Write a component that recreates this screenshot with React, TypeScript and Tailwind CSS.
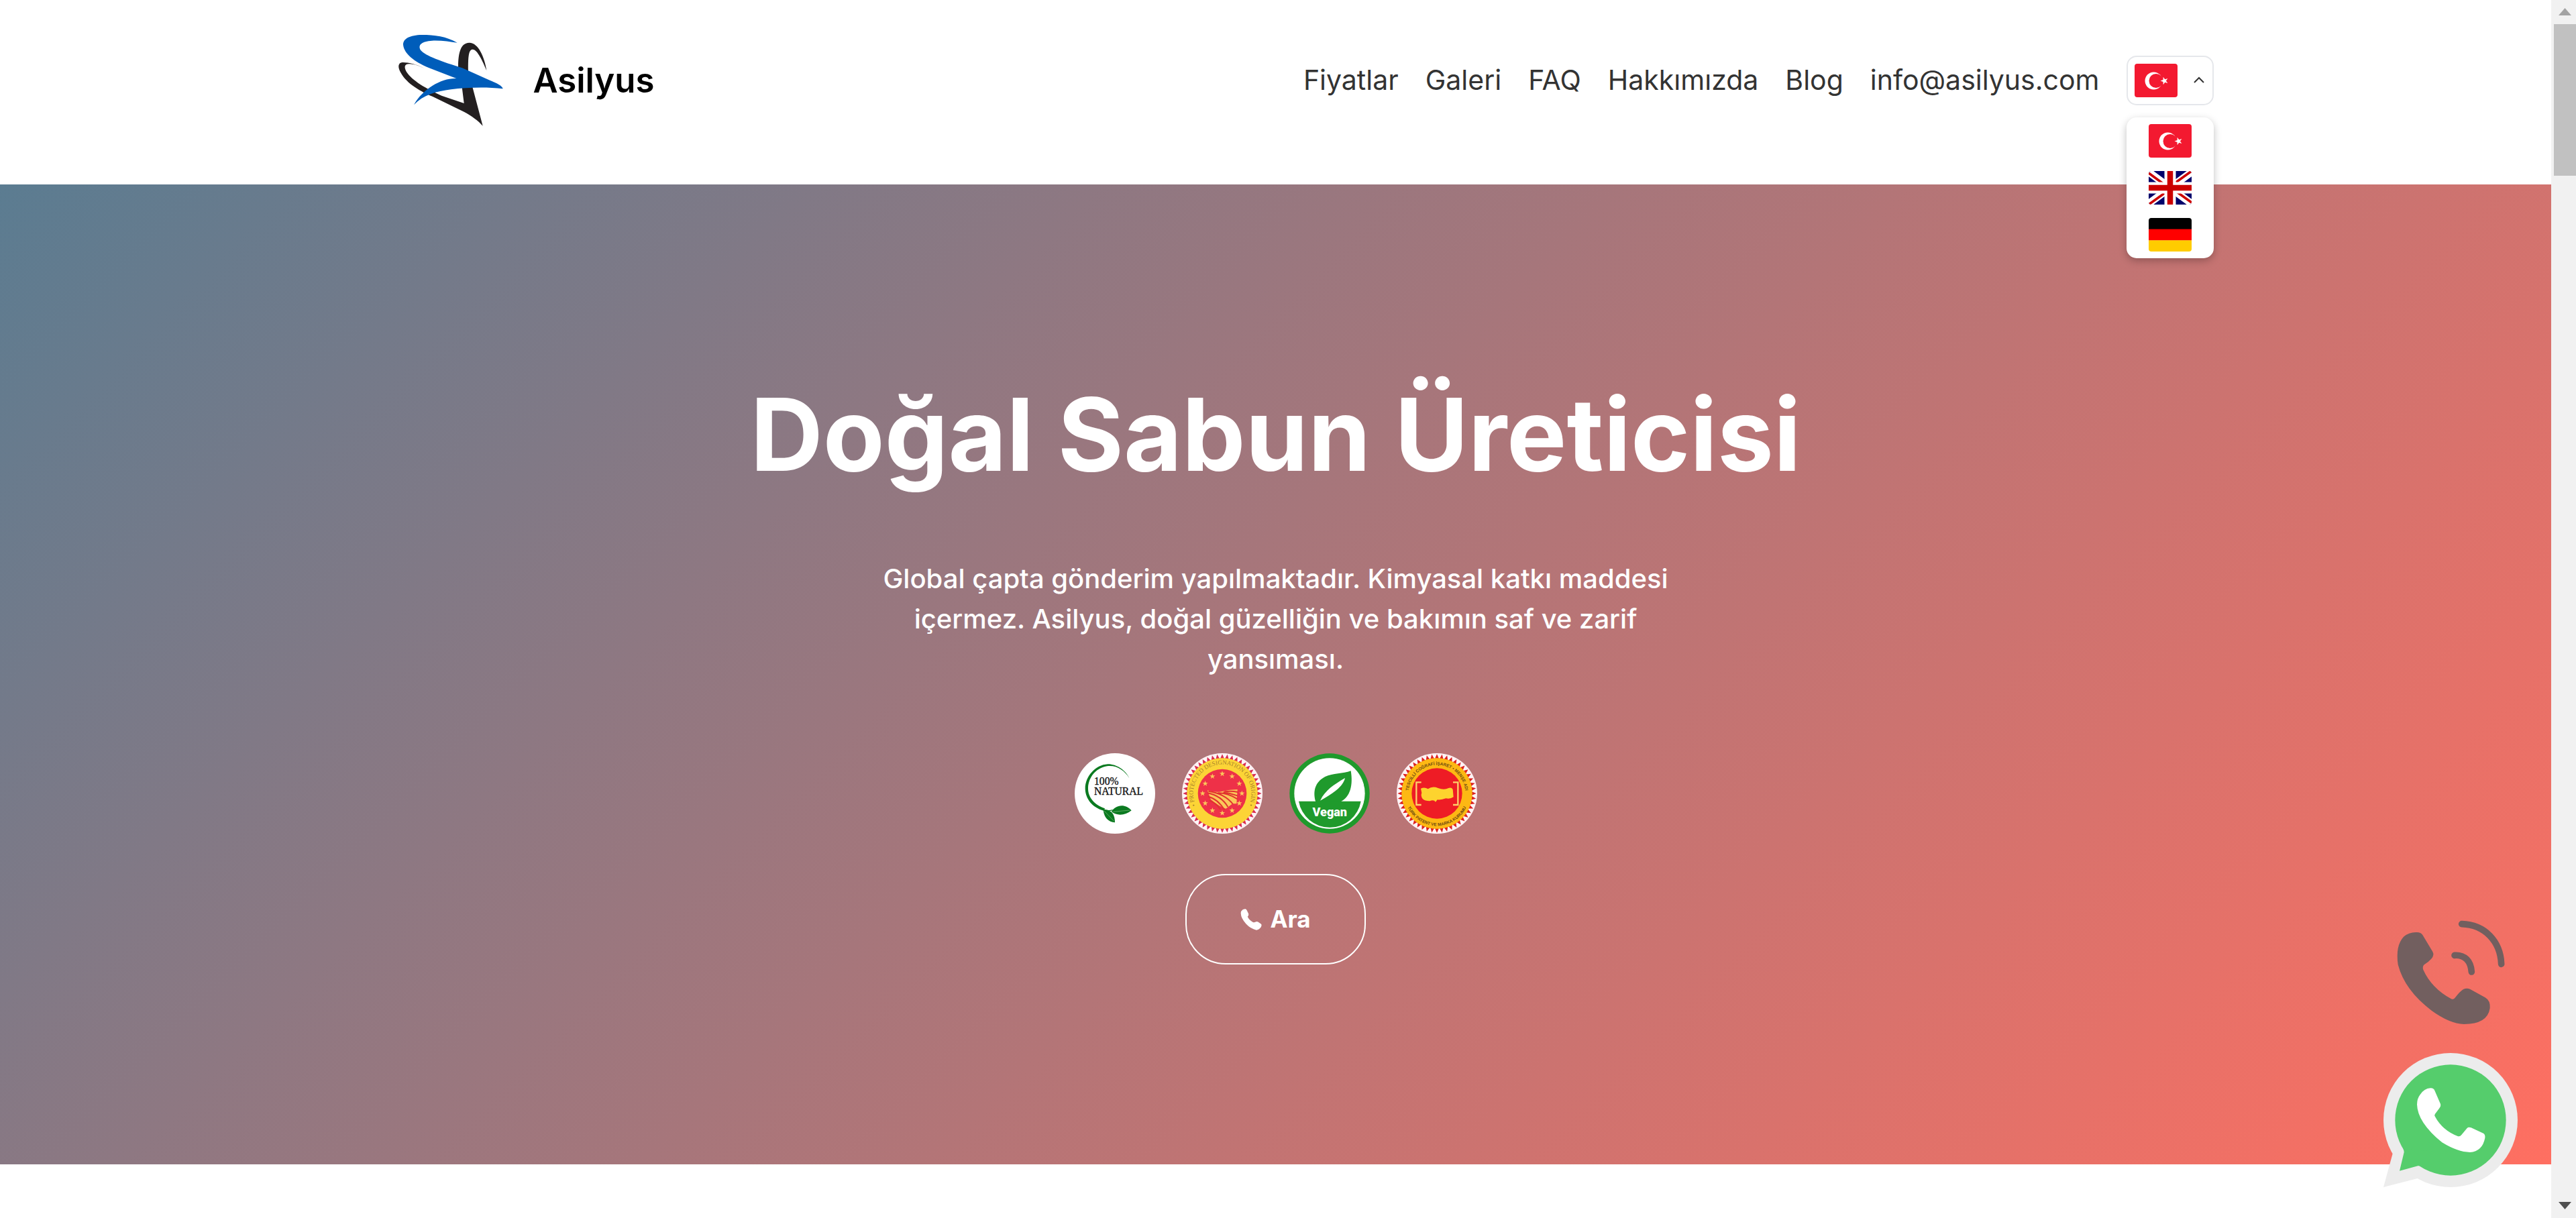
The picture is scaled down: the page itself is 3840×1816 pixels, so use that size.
import { useState } from "react"

type FlagCode = "tr" | "en" | "de"

const navLinks = [
  { label: "Fiyatlar", href: "#fiyatlar" },
  { label: "Galeri", href: "#galeri" },
  { label: "FAQ", href: "#faq" },
  { label: "Hakkımızda", href: "#hakkimizda" },
  { label: "Blog", href: "#blog" },
  { label: "info@asilyus.com", href: "mailto:info@asilyus.com" },
]

const languages: { code: FlagCode; label: string }[] = [
  { code: "tr", label: "Türkçe" },
  { code: "en", label: "English" },
  { code: "de", label: "Deutsch" },
]

function starPoints(cx: number, cy: number, r: number, turn = -90) {
  return Array.from({ length: 10 }, (_, i) => {
    const a = ((turn + i * 36) * Math.PI) / 180
    const d = i % 2 === 0 ? r : r * 0.4
    return `${(cx + d * Math.cos(a)).toFixed(2)},${(cy + d * Math.sin(a)).toFixed(2)}`
  }).join(" ")
}

function Flag({ code }: { code: FlagCode }) {
  return (
    <svg viewBox="0 0 64 50" className="w-16 h-[50px] rounded-sm" aria-hidden="true">
      {code === "tr" && (
        <>
          <rect width="64" height="50" fill="#f31930" />
          <circle cx="28.500" cy="25.500" r="13" fill="#fff" />
          <circle cx="32" cy="25.500" r="10.500" fill="#f31930" />
          <polygon points={starPoints(44.5, 25.5, 6, 180)} fill="#fff" />
        </>
      )}
      {code === "en" && (
        <>
          <rect width="64" height="50" fill="#00006b" />
          <path d="M-2 0L66 50M66 0L-2 50" stroke="#fff" strokeWidth="11" />
          <path d="M0 3L32 26.500M64 0L32 23M64 47L32 24M0 50L32 27" stroke="#c00" strokeWidth="3.500" />
          <path d="M32 0V50M0 25H64" stroke="#fff" strokeWidth="17" />
          <path d="M32 0V50M0 25H64" stroke="#c00" strokeWidth="8.500" />
        </>
      )}
      {code === "de" && (
        <>
          <rect width="64" height="17" fill="#000" />
          <rect y="16.600" width="64" height="17" fill="#f00" />
          <rect y="33.300" width="64" height="17" fill="#fc0" />
        </>
      )}
    </svg>
  )
}

function Logo() {
  return (
    <svg viewBox="-165 0 873 600" className="w-[291px] h-[200px]" aria-hidden="true">
      <path
        d="M222 247C185 226 145 218 122 219C104 221 102 238 111 257C135 307 190 343 258 372L398 440C432 458 462 480 482 503L434 322L388 322L398 402L298 368C230 338 165 300 141 262C128 238 133 226 153 226C177 226 202 237 222 247Z"
        fill="#231f20"
      />
      <path
        d="M372 240C372 190 378 131 422 131C462 131 490 195 499 255C482 215 458 161 437 161C419 161 416 190 417 260L417 300L372 290Z"
        fill="#231f20"
      />
      <path
        d="M368 131C320 103 265 96 210 96C155 97 126 113 126 140C130 180 175 215 240 243L364 291C300 288 215 335 174 409C215 365 275 348 340 340C410 332 490 328 572 337C570 325 545 312 510 298L390 244C300 215 225 190 204 164C190 140 210 125 255 122C295 120 335 127 368 131Z"
        fill="#005dba"
      />
    </svg>
  )
}

function NaturalBadge() {
  return (
    <svg viewBox="0 0 360 360" className="size-[120px]" role="img" aria-label="100% Natural">
      <circle cx="180" cy="180" r="180" fill="#fff" />
      <path
        d="M244 111C228 75 185 48 148 49C92 52 47 105 47 158C48 205 80 243 130 257L135 247C88 230 59 198 60 155C62 104 100 62 150 57C190 54 224 78 244 111Z"
        fill="#0b7a20"
      />
      <path d="M128 254C165 250 180 275 180 310C150 306 132 290 128 254Z" fill="#0b7a20" />
      <path d="M165 262C180 232 225 222 254 256C228 278 190 282 165 262Z" fill="#0b7a20" />
      <path d="M120 248Q145 262 170 254" stroke="#0b7a20" strokeWidth="4" fill="none" />
      <path d="M132 258L176 304M172 262L246 255" stroke="#7fbf7f" strokeWidth="2" />
      <g fill="#111" stroke="#111" strokeWidth="1" fontFamily="'Liberation Serif', serif">
        <text x="87" y="141" fontSize="47">100%</text>
        <text x="87" y="187" fontSize="47">NATURAL</text>
      </g>
    </svg>
  )
}

function SealTeeth({ color }: { color: string }) {
  return (
    <>
      <circle cx="180" cy="180" r="180" fill="#fdf3f5" />
      {Array.from({ length: 48 }, (_, i) => (
        <polygon
          key={i}
          points="180,4 189,25 171,25"
          fill={color}
          transform={`rotate(${i * 7.5} 180 180)`}
        />
      ))}
    </>
  )
}

function OriginBadge() {
  return (
    <svg viewBox="0 0 360 360" className="size-[120px]" role="img" aria-label="Protected designation of origin">
      <SealTeeth color="#d92b50" />
      <circle cx="180" cy="180" r="158" fill="#fcd436" />
      <circle cx="180" cy="180" r="109" fill="#ee3148" />
      {Array.from({ length: 12 }, (_, i) => {
        const a = (i * Math.PI) / 6
        return (
          <polygon
            key={i}
            points={starPoints(180 + 88 * Math.cos(a), 180 + 88 * Math.sin(a), 13)}
            fill="#fbc75a"
          />
        )
      })}
      <path
        d="M114 166Q150 178 178 171Q215 162 248 162L244 226L226 226L212 236L196 248Q166 238 128 206Z"
        fill="#fbc75a"
      />
      <path
        d="M114 178Q175 190 205 240M116 194Q160 204 190 254M122 212Q150 220 172 252M118 170Q190 180 228 228M160 178Q205 178 248 205M185 174Q220 180 248 190M190 172Q220 168 250 174"
        stroke="#e0342f"
        strokeWidth="6"
        fill="none"
      />
      <path id="origin-ring" d="M88 272A130 130 0 1 1 272 272" fill="none" />
      <text fontSize="27" fill="#a8822a" fontFamily="'Liberation Serif', serif">
        <textPath href="#origin-ring" startOffset="50%" textAnchor="middle">
          • PROTECTED DESIGNATION OF ORIGIN •
        </textPath>
      </text>
    </svg>
  )
}

function VeganBadge() {
  return (
    <svg viewBox="0 0 360 360" className="size-[120px]" role="img" aria-label="Vegan">
      <circle cx="180" cy="180" r="179" fill="#1f9a2c" />
      <circle cx="180" cy="180" r="158" fill="#fff" />
      <path d="M42 215H320A141 141 0 0 1 42 215Z" fill="#1f9a2c" />
      <path
        d="M118 218C105 175 112 130 160 105C195 90 240 92 275 79C285 140 275 195 228 218Z"
        fill="#1f9a2c"
      />
      <path d="M138 212C160 165 200 140 249 111C240 150 195 180 138 212Z" fill="#fff" />
      <text
        x="181"
        y="283"
        fontSize="54"
        fontWeight="900"
        fill="#fff"
        textAnchor="middle"
        fontFamily="Roboto, sans-serif"
      >
        Vegan
      </text>
    </svg>
  )
}

function PatentBadge() {
  return (
    <svg viewBox="0 0 360 360" className="size-[120px]" role="img" aria-label="Türk Patent ve Marka Kurumu">
      <SealTeeth color="#dc2020" />
      <circle cx="180" cy="180" r="158" fill="#fdb813" />
      <circle cx="180" cy="180" r="113" fill="#ee1c25" />
      <path
        d="M108 158Q125 150 140 160Q160 146 185 156Q212 166 232 156Q246 152 251 162L254 196Q240 206 220 202Q200 210 182 208L174 218Q166 206 148 214Q126 214 116 204Q106 190 112 178Z"
        fill="#fdd32e"
      />
      <path
        d="M110 130H88V231H110M252 130H274V231H252"
        stroke="#fdd06a"
        strokeWidth="7"
        fill="none"
      />
      <path id="patent-top" d="M53 180A127 127 0 0 1 307 180" fill="none" />
      <path id="patent-bottom" d="M35 180A145 145 0 0 0 325 180" fill="none" />
      <g fontSize="19" fontWeight="700" fill="#6d4a12" fontFamily="'Liberation Sans', sans-serif">
        <text>
          <textPath href="#patent-top" startOffset="50%" textAnchor="middle">
            TESCİLLİ COĞRAFİ İŞARET • MENŞE ADI
          </textPath>
        </text>
        <text>
          <textPath href="#patent-bottom" startOffset="50%" textAnchor="middle">
            TÜRK PATENT VE MARKA KURUMU
          </textPath>
        </text>
      </g>
    </svg>
  )
}

function LanguagePicker() {
  const [open, setOpen] = useState(true)
  const [selected, setSelected] = useState<FlagCode>("tr")

  return (
    <div className="relative">
      <button
        type="button"
        aria-label="Dil seç"
        aria-expanded={open}
        onClick={() => setOpen(!open)}
        className="flex items-center justify-between w-[130px] h-[74px] px-[10px] border-2 border-gray-200 rounded-[15px] bg-white"
      >
        <Flag code={selected} />
        <svg viewBox="0 0 20 20" className="size-5" aria-hidden="true">
          <path d="M3 13L10 6L17 13" fill="none" stroke="#333" strokeWidth="2" />
        </svg>
      </button>
      {open && (
        <ul className="absolute z-10 top-full left-0 w-full mt-[18px] bg-white rounded-[15px] shadow-[0_4px_12px_rgba(0,0,0,0.25)]">
          {languages.map((language) => (
            <li key={language.code}>
              <button
                type="button"
                aria-label={language.label}
                onClick={() => {
                  setSelected(language.code)
                  setOpen(false)
                }}
                className="flex justify-center w-full py-[10px]"
              >
                <Flag code={language.code} />
              </button>
            </li>
          ))}
        </ul>
      )}
    </div>
  )
}

function Header() {
  return (
    <header className="bg-white pt-5 pb-[55px]">
      <div className="flex items-center justify-between max-w-[2796px] mx-auto">
        <a href="#" className="flex items-center text-[51px] font-semibold text-black">
          <Logo />
          Asilyus
        </a>
        <nav className="flex items-center gap-10">
          {navLinks.map((link) => (
            <a key={link.label} href={link.href} className="text-[41px] text-[#333]">
              {link.label}
            </a>
          ))}
          <LanguagePicker />
        </nav>
      </div>
    </header>
  )
}

function Hero() {
  return (
    <section className="flex flex-col items-center py-[298px] text-center text-white bg-[linear-gradient(135deg,#5b7c91,#ff6f61)]">
      <h1 className="text-[150px] leading-[150px] font-bold">Doğal Sabun Üreticisi</h1>
      <p className="max-w-[1200px] mt-[110px] text-[40px] leading-[60px] font-medium">
        Global çapta gönderim yapılmaktadır. Kimyasal katkı maddesi içermez. Asilyus, doğal güzelliğin ve bakımın saf ve zarif yansıması.
      </p>
      <div className="flex gap-10 mt-[110px]">
        <NaturalBadge />
        <OriginBadge />
        <VeganBadge />
        <PatentBadge />
      </div>
      <a
        href="tel:+900000000000"
        className="flex items-center gap-3 mt-[60px] px-20 py-[38px] text-[35px] leading-[55px] font-bold border-2 border-white rounded-[60px]"
      >
        <svg viewBox="330 196 96 98" className="size-8" aria-hidden="true">
          <path
            d="M333 207Q341 196 352 197Q357 198 359 204L366 218Q368 226 362 232Q368 246 384 256Q388 260 394 257L404 254Q410 254 414 259L424 266Q428 272 422 281Q414 292 402 293Q375 287 355 265Q332 240 331 217Q331 211 333 207Z"
            fill="currentColor"
          />
        </svg>
        Ara
      </a>
    </section>
  )
}

function ContactButtons() {
  return (
    <div className="fixed right-[87px] bottom-[46px] flex flex-col items-center gap-10">
      <a href="tel:+900000000000" aria-label="Telefon">
        <svg viewBox="140 60 510 480" className="w-[170px] h-40" aria-hidden="true">
          <path
            d="M185 140Q210 118 245 120Q262 120 270 132L315 207Q323 222 310 238Q295 255 277 265Q268 274 273 288Q310 370 398 418Q408 423 416 412Q437 384 452 375Q467 368 482 374L550 412Q574 426 571 460Q560 531 455 531Q390 528 310 470Q190 380 160 265Q148 180 185 140Z"
            fill="#725f5f"
          />
          <path
            d="M445 83C548 86 618 160 622 262M413 223C460 220 486 250 489 297"
            fill="none"
            stroke="#725f5f"
            strokeWidth="29"
            strokeLinecap="round"
          />
        </svg>
      </a>
      <a href="https://wa.me/900000000000" aria-label="WhatsApp">
        <svg viewBox="98 660 600 600" className="size-[200px]" aria-hidden="true">
          <circle cx="398" cy="960" r="300" fill="#ececec" />
          <path d="M140 1106L98 1260L262 1218L300 1100Z" fill="#ececec" />
          <circle cx="398" cy="960" r="248" fill="#55cd6c" />
          <path d="M186 1088Q191 1096 190 1104L170 1187L252 1165Q260 1163 268 1168L320 1100Z" fill="#55cd6c" />
          <path
            d="M262 846Q280 819 308 817Q322 816 327 828L353 888Q356 898 346 910L329 932Q324 938 329 945Q362 1006 430 1032Q440 1035 447 1026L472 996Q478 989 490 994L546 1020Q554 1026 552 1040Q540 1100 485 1104Q430 1103 360 1060Q250 970 248 890Q248 864 262 846Z"
            fill="#fff"
          />
        </svg>
      </a>
    </div>
  )
}

function PageScrollbar() {
  return (
    <div className="flex flex-col justify-between items-end w-[37px] h-screen bg-[#f1f1f1]" aria-hidden="true">
      <div className="w-[33px]">
        <svg viewBox="0 0 33 36" className="w-full h-9">
          <polygon points="7,23 26,23 16.500,12" fill="#a3a3a3" />
        </svg>
        <div className="h-[226px] bg-[#c1c1c1]" />
      </div>
      <svg viewBox="0 0 33 36" className="w-[33px] h-9">
        <polygon points="7,12 26,12 16.500,23" fill="#505050" />
      </svg>
    </div>
  )
}

export default function App() {
  return (
    <div className="flex min-h-screen bg-white font-['Inter',sans-serif]">
      <main className="flex-1">
        <Header />
        <Hero />
      </main>
      <PageScrollbar />
      <ContactButtons />
    </div>
  )
}
